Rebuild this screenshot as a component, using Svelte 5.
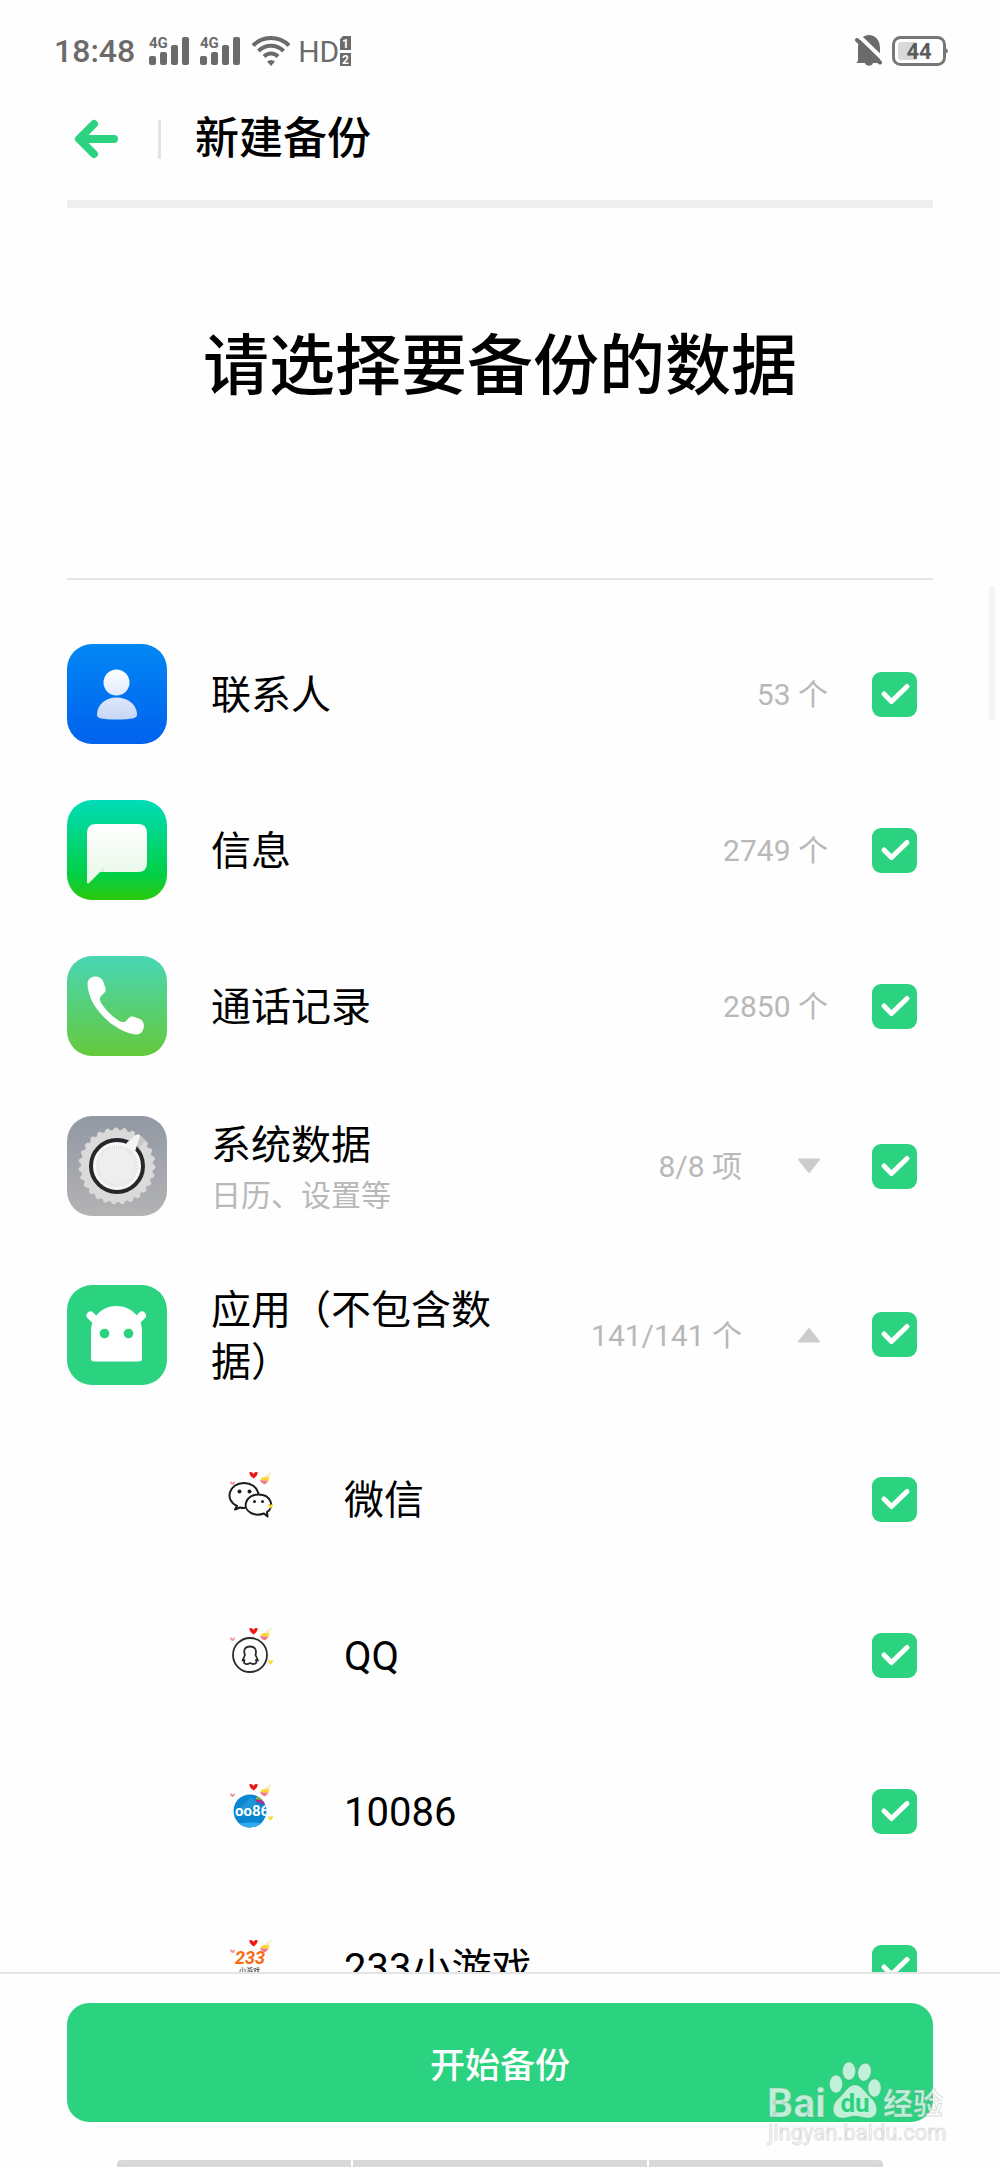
<script lang="ts">
  let groups = [
    { id: "contacts", name: "联系人", count: "53 个", checked: true },
    { id: "messages", name: "信息", count: "2749 个", checked: true },
    { id: "calls", name: "通话记录", count: "2850 个", checked: true },
    { id: "system", name: "系统数据", note: "日历、设置等", count: "8/8 项", arrow: "down", checked: true },
    { id: "apps", name: "应用（不包含数据）", count: "141/141 个", arrow: "up", checked: true },
  ];

  let apps = [
    { id: "wechat", name: "微信", checked: true },
    { id: "qq", name: "QQ", checked: true },
    { id: "cmcc", name: "10086", checked: true },
    { id: "games", name: "233小游戏", checked: true },
  ];

  // toothed edge of the settings dial
  function gearPath(teeth: number, outer: number, inner: number) {
    const points: string[] = [];
    for (let i = 0; i < teeth * 4; i++) {
      const r = i % 4 < 2 ? outer : inner;
      const a = (i / (teeth * 4)) * Math.PI * 2;
      points.push(`${(50 + r * Math.cos(a)).toFixed(2)} ${(50 + r * Math.sin(a)).toFixed(2)}`);
    }
    return "M" + points.join("L") + "Z";
  }

  const dial = gearPath(27, 38, 35.5);
</script>

{#snippet check(item)}
  <span class="check">
    <input type="checkbox" id={item.id} bind:checked={item.checked}>
    <svg viewBox="0 0 45 45" aria-hidden="true">
      <path d="M12 22L19.5 29.500L35 14.500" />
    </svg>
  </span>
{/snippet}

{#snippet signal()}
  <svg class="signal" width="40" height="30" viewBox="0 0 40 30" aria-hidden="true">
    <g fill="#6b6b6b">
      <rect x="0" y="20" width="7" height="9" rx="2" />
      <rect x="11" y="16" width="7" height="13" rx="2" />
      <rect x="22" y="9" width="7" height="20" rx="2" />
      <rect x="33" y="1" width="7" height="28" rx="2" />
      <text x="0" y="12" font-size="15" font-weight="700">4G</text>
    </g>
  </svg>
{/snippet}

<main>
  <div class="status">
    <span class="time">18:48</span>
    {@render signal()}
    {@render signal()}
    <svg width="40" height="32" viewBox="0 0 40 32" aria-hidden="true">
      <g fill="none" stroke="#6b6b6b" stroke-width="4">
        <path d="M2 10.500C12 .500 28 .500 38 10.500" />
        <path d="M7.500 16C14.500 9 25.500 9 32.500 16" />
        <path d="M13 21.500C17 17.500 23 17.500 27 21.500" />
      </g>
      <path d="M16 26.500Q20 23.500 24 26.500L20 31Z" fill="#6b6b6b" />
    </svg>
    <span class="hd">HD</span>
    <svg class="sims" width="11" height="32" viewBox="0 0 11 32" aria-hidden="true">
      <path d="M3 1H11V15H0V4Z M0 18H11V31H0Z" fill="#6b6b6b" />
      <g fill="#fff" font-size="12" font-weight="700" text-anchor="middle">
        <text x="5.500" y="12.500">1</text>
        <text x="5.500" y="29">2</text>
      </g>
    </svg>
    <span class="space"></span>
    <svg width="28" height="34" viewBox="0 0 28 34" aria-hidden="true">
      <path d="M3 27V14C3 6 8 1 14 1S25 6 25 14V27L26 29H18C17 32.500 11 32.500 10 29H2Q1 28 3 27Z" fill="#6b6b6b" />
      <path d="M5 3L29 26" stroke="#fefefe" stroke-width="4" />
      <path d="M2 6L25 28.500" stroke="#6b6b6b" stroke-width="4" stroke-linecap="round" />
    </svg>
    <svg class="battery" width="56" height="32" viewBox="0 0 56 32" aria-hidden="true">
      <rect x="1.500" y="2.500" width="51" height="27" rx="7" fill="none" stroke="#777" stroke-width="3" />
      <rect x="6" y="7" width="19" height="18" rx="3" fill="#d9d9d9" />
      <path d="M53 13Q56 14 56 16T53 19Z" fill="#777" />
      <text x="27" y="24" font-size="22" font-weight="700" text-anchor="middle" fill="#5b5b5b">44</text>
    </svg>
  </div>

  <header>
    <button class="back" type="button" aria-label="返回">
      <svg width="46" height="40" viewBox="0 0 46 40" aria-hidden="true">
        <path d="M21 5L6 20L21 35M7 20H41" />
      </svg>
    </button>
    <span class="rule"></span>
    <h2>新建备份</h2>
  </header>
  <div class="progress"></div>

  <h1>请选择要备份的数据</h1>

  <section class="list">
    {#each groups as group (group.id)}
      <div class="row {group.id}">
        <svg class="icon" width="100" height="100" viewBox="0 0 100 100" aria-hidden="true">
          {#if group.id === "contacts"}
            <defs>
              <linearGradient id="blue" x2="0" y2="1"><stop stop-color="#0287f4" /><stop offset="1" stop-color="#0162ee" /></linearGradient>
              <linearGradient id="person" gradientUnits="userSpaceOnUse" x1="0" y1="25" x2="0" y2="76"><stop stop-color="#fff" /><stop offset="1" stop-color="#c5d5f6" /></linearGradient>
            </defs>
            <rect width="100" height="100" rx="25" fill="url(#blue)" />
            <circle cx="49.500" cy="38.500" r="13" fill="url(#person)" />
            <path d="M30 71C30 60 39 53.500 49.500 53.500S70 60 70 71C70 74 65 75.500 49.500 75.500S30 74 30 71Z" fill="url(#person)" />
          {:else if group.id === "messages"}
            <defs>
              <linearGradient id="green" x2="0" y2="1"><stop stop-color="#00dcb8" /><stop offset=".75" stop-color="#03cf45" /><stop offset="1" stop-color="#2bc90c" /></linearGradient>
              <linearGradient id="bubble" x2="0" y2="1"><stop stop-color="#fff" /><stop offset="1" stop-color="#e7f6e7" /></linearGradient>
            </defs>
            <rect width="100" height="100" rx="25" fill="url(#green)" />
            <path d="M29 24H71Q80 24 80 33V63Q80 72 71 72H33L21.500 83.500Q20 84 20 82V33Q20 24 29 24Z" fill="url(#bubble)" />
            <path d="M33 72L37.500 67.500Q37 71 36 72Z" fill="#d5ead6" />
          {:else if group.id === "calls"}
            <defs>
              <linearGradient id="mint" x2="0" y2="1"><stop stop-color="#48d6b4" /><stop offset="1" stop-color="#65c93b" /></linearGradient>
            </defs>
            <rect width="100" height="100" rx="25" fill="url(#mint)" />
            <path d="M20.500 28C20.500 19 33 18 36 25L38.500 32C40 38 32 38 33 44C35 51 48 64 55 66C61 67 60 60 66 60.500L73 63C80 67 77 79 69 78.500C47 76 21 51 20.500 28Z" fill="#fff" />
          {:else if group.id === "system"}
            <defs>
              <linearGradient id="grey" x2="0" y2="1"><stop stop-color="#9298a3" /><stop offset="1" stop-color="#b3b3b4" /></linearGradient>
            </defs>
            <rect width="100" height="100" rx="25" fill="url(#grey)" />
            <path d={dial} fill="#dadada" stroke="#dadada" stroke-linejoin="round" />
            <path d="M62 27L72 19Q76 21 79 25L70 34Z" fill="#c9c9c9" />
            <circle cx="50" cy="50" r="26" fill="#f7f7f7" stroke="#25272a" stroke-width="4" />
            <path d="M60 26.500L69 19Q73 17 73 20L68.500 34L64 40L56 34Z" fill="#f4f4f4" />
            <circle cx="50" cy="50" r="19" fill="none" stroke="#dedede" stroke-width="4" stroke-dasharray="1 1" />
            <circle cx="50" cy="50" r="17" fill="#eee" />
          {:else}
            <rect width="100" height="100" rx="25" fill="#2bd280" />
            <path d="M23.500 30.500L31 38M75 30.500L67.500 38" stroke="#fff" stroke-width="8" stroke-linecap="round" />
            <path d="M24 46C24 32 35 21 49.500 21S75 32 75 46V73.500Q75 76.500 72 76.500H27Q24 76.500 24 73.500Z" fill="#fff" />
            <circle cx="37.500" cy="48.500" r="4.800" fill="#2bd280" />
            <circle cx="61.500" cy="48.500" r="4.800" fill="#2bd280" />
          {/if}
        </svg>
        <div class="text">
          <label for={group.id}>{group.name}</label>
          {#if group.note}
            <small>{group.note}</small>
          {/if}
        </div>
        <span class="count">{group.count}</span>
        {#if group.arrow}
          <button class="toggle" type="button" aria-label={group.arrow === "up" ? "收起" : "展开"}>
            <svg width="24" height="16" viewBox="0 0 24 16" aria-hidden="true">
              {#if group.arrow === "up"}
                <path d="M2 14.500L12 2L22 14.500Z" />
              {:else}
                <path d="M2 1.500L12 14L22 1.500Z" />
              {/if}
            </svg>
          </button>
        {/if}
        {@render check(group)}
      </div>
    {/each}

    {#each apps as app (app.id)}
      <div class="row app">
        <svg class="icon" width="48" height="60" viewBox="0 0 48 60" aria-hidden="true">
          {#if app.id === "wechat"}
            <g fill="#fefefe" stroke="#1c1c1c" stroke-width="2" stroke-linejoin="round">
              <path d="M11 37C-2 31 3 14 18 14S38 31 25 37Q20 40 14 38.500L9 40.500Z" />
              <path d="M38 44.500L41.500 47.500L41 43C49 38 45 25.500 32.500 25.500S15 39 25 44Q31 47 38 44.500Z" />
            </g>
            <g fill="#1c1c1c">
              <circle cx="13.500" cy="22.500" r="2" />
              <circle cx="23.500" cy="22.500" r="2" />
              <circle cx="28.500" cy="32.500" r="1.500" />
              <circle cx="36.500" cy="32.500" r="1.500" />
            </g>
          {:else if app.id === "qq"}
            <g fill="none" stroke="#2b2b2b" stroke-width="1.800" stroke-linejoin="round">
              <circle cx="24" cy="30" r="17" />
              <path d="M19 30C17 25 19 21.500 24 21.500S31 25 29.500 30L32 35.500L30 35C31 38 30 39 26.500 39L24 38L22 39C18 39.500 17.500 38 18.500 35L16.500 35.500Z" />
            </g>
          {:else if app.id === "cmcc"}
            <clipPath id="disc"><circle cx="24" cy="30" r="16.500" /></clipPath>
            <g clip-path="url(#disc)">
              <rect x="7" y="13" width="34" height="34" fill="#0986cf" />
              <path d="M12 29L25 16L31 21L18 34Z" fill="#2194d6" />
              <path d="M8 43Q24 40 40 43V48H8Z" fill="#2eaaf0" />
              <path d="M30 17L36 18.500" stroke="#8db63a" stroke-width="2.500" />
              <path d="M30 20Q35 19 38 23" stroke="#b8288e" stroke-width="2.500" fill="none" />
              <text x="9" y="34.500" font-size="15" font-weight="700" fill="#fff">oo86</text>
            </g>
          {:else}
            <text x="9" y="27" font-size="18" font-weight="700" font-style="italic" fill="#f96b10">233</text>
            <text x="13" y="36" font-size="7" fill="#333">小游戏</text>
          {/if}
          <path d="M23 3.500Q26 2 27.500 5Q29 2 32 3.500Q31 7.500 27.500 9.500Q24 7.500 23 3.500Z" fill="#ef1616" />
          <path d="M4 12.500Q6 12 6.500 14Q7 12 9 12.500Q9 15 6.500 16Q4 15 4 12.500Z" fill="#f58c96" />
          <path d="M42 35Q44 34.500 44.500 36.500Q45 34.500 47 35Q47 38 44.500 39.500Q42 38 42 35Z" fill="#f8d934" />
          <path d="M34 11L46 1.500L42 12.500Z" fill="#f7efc6" />
          <path d="M34 10.500L37 8L43.500 8.500L42 12.500Z" fill="#fbd437" />
          <path d="M34 11L42.500 12L39 15.500Q35 14 34 11Z" fill="#f07a92" />
        </svg>
        <div class="text">
          <label for={app.id}>{app.name}</label>
        </div>
        {@render check(app)}
      </div>
    {/each}
    <span class="thumb"></span>
  </section>

  <footer>
    <button class="start" type="button">开始备份</button>
    <div class="nav"><i></i><i></i><i></i></div>
    <svg class="watermark" width="184" height="90" viewBox="0 0 184 90" aria-hidden="true">
      <g fill="#fff" fill-opacity=".7" stroke="#8a8a8a" stroke-opacity=".3" stroke-width="1">
        <ellipse cx="69" cy="23" rx="6.500" ry="9" />
        <ellipse cx="82" cy="10" rx="6.500" ry="9" />
        <ellipse cx="97.500" cy="11" rx="6.500" ry="9" transform="rotate(12 97 11)" />
        <ellipse cx="107.500" cy="27" rx="6.500" ry="9" />
        <path d="M88 24C95 24 98 32 104 37C112 44 112 57 101 57C96 57 93 55 88 55S80 57 76 57C64 57 64 44 71 38C78 32 81 24 88 24Z" />
        <text x="0" y="56" font-size="41" font-weight="700">Bai</text>
        <text x="116" y="53" font-size="30" font-weight="700">经验</text>
        <text x="1" y="79" font-size="22">jingyan.baidu.com</text>
      </g>
      <text x="88" y="51" font-size="26" font-weight="700" text-anchor="middle" fill="#2bd280">du</text>
    </svg>
  </footer>
</main>

<style>
  :global(body) {
    margin: 0;
    background: #fefefe;
  }

  main {
    display: flex;
    flex-direction: column;
    height: 100vh;
    color: #000;
    font-family: Roboto, "Noto Sans CJK SC", sans-serif;
  }

  button {
    padding: 0;
    border: 0;
    background: none;
    font-family: inherit;
  }

  svg {
    display: block;
    flex: none;
  }

  .status {
    display: flex;
    align-items: center;
    gap: 11px;
    height: 102px;
    padding: 0 52px 0 54px;
    color: #6b6b6b;
    font-size: 32px;
  }

  .time {
    margin-right: 3px;
    font-weight: 500;
  }

  .signal {
    overflow: visible;
  }

  .hd {
    margin-left: -4px;
    font-size: 30px;
  }

  .sims {
    margin-left: -10px;
  }

  .space {
    flex: 1;
  }

  .battery {
    margin-left: -2px;
  }

  header {
    display: flex;
    align-items: center;
    height: 74px;
    margin-bottom: 24px;
    padding: 0 73px;
  }

  .back path {
    fill: none;
    stroke: #2bd280;
    stroke-width: 8;
    stroke-linecap: round;
    stroke-linejoin: round;
  }

  .rule {
    width: 3px;
    height: 39px;
    margin: 0 34px 0 39px;
    background: #e3e3e3;
  }

  h2 {
    margin: 0;
    font-size: 44px;
    font-weight: 500;
    line-height: 64px;
  }

  .progress {
    flex: none;
    height: 8px;
    margin: 0 67px;
    background: #eee;
  }

  h1 {
    margin: 0 67px;
    padding: 111px 0 163px;
    border-bottom: 2px solid #e5e5e5;
    font-size: 66px;
    font-weight: 500;
    line-height: 96px;
    text-align: center;
  }

  .list {
    position: relative;
    flex: 1;
    min-height: 0;
    padding: 36px 83px 0 67px;
    overflow-y: auto;
    scrollbar-width: none;
  }

  .row {
    display: flex;
    align-items: center;
    height: 156px;
  }

  .row.system {
    height: 164px;
  }

  .row.apps {
    height: 173px;
  }

  .text {
    display: flex;
    flex-direction: column;
    gap: 4px;
    max-width: 300px;
    margin: 0 auto 0 44px;
    padding-top: 4px;
    font-size: 40px;
    line-height: 52px;
  }

  small {
    color: #b8b8b8;
    font-size: 30px;
    line-height: 40px;
  }

  .count {
    padding-top: 2px;
    color: #b8b8b8;
    font-size: 30px;
    line-height: 40px;
  }

  .toggle {
    margin-left: 55px;
    margin-right: 7px;
  }

  .toggle path {
    fill: #ccc;
    stroke: #ccc;
    stroke-width: 2;
    stroke-linejoin: round;
  }

  .check {
    display: grid;
    flex: none;
    width: 45px;
    height: 45px;
    margin-left: 44px;
  }

  .check input,
  .check svg {
    grid-area: 1 / 1;
    width: 45px;
    height: 45px;
    margin: 0;
  }

  .check input {
    appearance: none;
    border-radius: 9px;
    background: #e5e5e5;
  }

  .check input:checked {
    background: #2bd280;
  }

  .check svg {
    pointer-events: none;
  }

  .check path {
    fill: none;
    stroke: #fff;
    stroke-width: 5;
    stroke-linecap: round;
    stroke-linejoin: round;
  }

  .app .icon {
    margin-left: 159px;
  }

  .app .text {
    margin-left: 70px;
  }

  .thumb {
    position: absolute;
    top: 6px;
    right: 5px;
    width: 6px;
    height: 134px;
    border-radius: 3px;
    background: #f4f4f4;
  }

  footer {
    position: relative;
    display: flex;
    flex-direction: column;
    padding: 29px 67px 0;
    border-top: 2px solid #e3e5e4;
  }

  .start {
    height: 119px;
    border-radius: 22px;
    background: #2bd280;
    color: #fff;
    font-size: 35px;
    font-weight: 500;
  }

  .nav {
    display: flex;
    gap: 2px;
    margin: 38px 50px 0;
    border-radius: 4px 4px 0 0;
    overflow: hidden;
  }

  .nav i {
    flex: 4;
    height: 7px;
    background: #d7d8d7;
  }

  .nav i:nth-child(2) {
    flex: 5;
  }

  .watermark {
    position: absolute;
    right: 49px;
    bottom: 16px;
  }
</style>
